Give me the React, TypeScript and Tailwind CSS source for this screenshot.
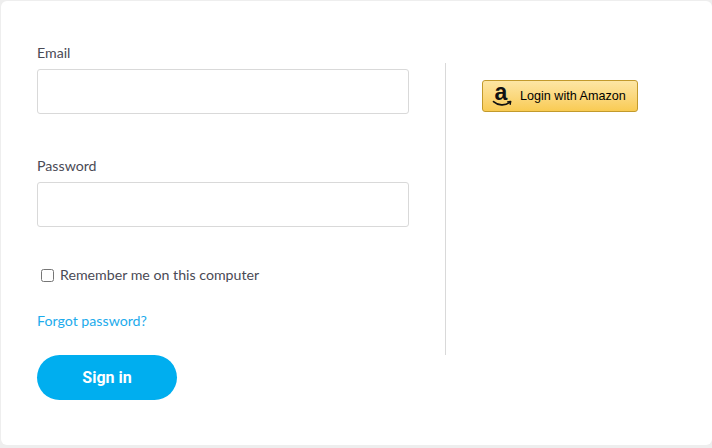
import { useState } from 'react';

function AmazonLogo() {
  return (
    <svg viewBox="0 0 24 24" className="w-6 h-6 shrink-0 overflow-visible">
      <text x="12" y="16" textAnchor="middle" fontFamily="'Liberation Sans', sans-serif" fontWeight="700" fontSize="23" fill="#111">a</text>
      <path d="M4.5 17.6 C9 21.6 16 22 20.4 18.6" fill="none" stroke="#111" strokeWidth="1.6" strokeLinecap="round" />
      <path d="M18.6 17.8 L21.8 17.4 L21.2 20.4" fill="none" stroke="#111" strokeWidth="1.3" strokeLinecap="round" strokeLinejoin="round" />
    </svg>
  );
}

export default function App() {
  const [remember, setRemember] = useState(false);

  return (
    <div className="h-[448px] w-[712px] bg-[#eeeeee] pt-px pl-px pb-[3px] overflow-hidden font-['Lato',sans-serif] text-[#4a4a55]">
      <div className="h-full bg-white rounded-md pl-9 pr-0 pt-[44px] flex">
        {/* Form */}
        <div className="w-[372px]">
          <label className="block text-[14.2px] leading-4 mb-2">Email</label>
          <input type="text" className="block w-full h-[45px] bg-white border border-[#d9d9d9] rounded-[3px] outline-none" />

          <label className="block text-[14.2px] leading-4 mt-11 mb-2">Password</label>
          <input type="password" className="block w-full h-[45px] bg-white border border-[#d9d9d9] rounded-[3px] outline-none" />

          <label className="flex items-center mt-10 ml-1 text-[14.2px] leading-4">
            <input
              type="checkbox"
              checked={remember}
              onChange={e => setRemember(e.target.checked)}
              className="w-[13px] h-[13px] mr-[6px] mt-px"
            />
            <span>Remember me on this computer</span>
          </label>

          <a href="#" className="block mt-[30px] text-[14.2px] leading-4 text-[#1cabec]">Forgot password?</a>

          <button className="block mt-[26px] w-[140px] h-[45px] rounded-full bg-[#00aeef] text-white text-base font-bold font-['Roboto',sans-serif]">
            Sign in
          </button>
        </div>

        {/* Divider */}
        <div className="ml-9 mt-[18px] w-px h-[292px] bg-[#d9d9d9]" />

        {/* Amazon */}
        <div className="ml-9 mt-[35px]">
          <button className="flex items-center w-[156px] h-[32px] rounded-[3px] border border-[#c29a2c] bg-gradient-to-b from-[#fde6a4] to-[#f9cb52] pl-[6px] gap-[7px] text-[12.6px] text-black font-['Liberation_Sans',sans-serif]">
            <AmazonLogo />
            <span>Login with Amazon</span>
          </button>
        </div>
      </div>
    </div>
  );
}
